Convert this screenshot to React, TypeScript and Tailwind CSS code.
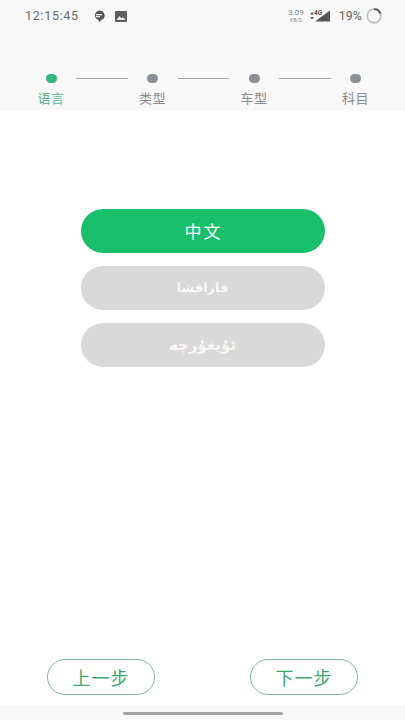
const font = { fontFamily: '"Roboto","Noto Sans CJK SC",sans-serif' };

function Step({ label, active }: { label: string; active?: boolean }) {
  return (
    <div className="flex w-[50px] shrink-0 flex-col items-center">
      <div className={`h-[9px] w-[11px] rounded-full ${active ? "bg-[#35b47f]" : "bg-[#8e8e96]"}`} />
      <div className={`mt-[7px] text-[13px] leading-[18px] tracking-[0.5px] whitespace-nowrap ${active ? "text-[#5cb68f]" : "text-[#8a8a8a]"}`}>{label}</div>
    </div>
  );
}

function Line() {
  return <div className="mt-[4px] h-px w-[51.5px] shrink-0 bg-[#a8a8a8]" />;
}

function LangButton({ label, active, size }: { label: string; active?: boolean; size?: string }) {
  return (
    <button
      className={`flex h-[44px] w-[244px] items-center justify-center rounded-full ${active ? "bg-[#1abf6b] pt-[3px] pl-[2px] text-[17px] tracking-[2px] text-white" : `bg-[#d9d9d9] font-bold text-[#f7f7f7] ${size}`}`}
      style={active ? undefined : { fontFamily: '"DejaVu Sans",sans-serif' }}
    >
      {label}
    </button>
  );
}

function NavButton({ label }: { label: string }) {
  return (
    <button className="flex h-[36px] w-[108px] items-center justify-center rounded-full border border-[#7dba9b] pt-[2px] text-[18px] tracking-[1px] text-[#3fa56d]">
      {label}
    </button>
  );
}

export default function App() {
  return (
    <div className="flex h-[720px] w-[405px] flex-col overflow-hidden bg-white" style={font}>
      <header className="h-[110px] shrink-0 bg-[#f8f8f8]">
        <div className="flex h-[32px] items-center pr-[23px] pl-[25px] text-[#6b6b6b]">
          <span className="text-[12.5px] tracking-[0.7px]">12:15:45</span>
          <svg className="ml-[14px]" width="12" height="13" viewBox="0 0 12 13">
            <path d="M6 0.5a5.5 5 0 0 1 2 9.7L6.2 12.4 5.6 10A5.5 5 0 0 1 6 .5z" fill="#555" />
            <rect x="3" y="4" width="6" height="1.3" fill="#eee" />
            <rect x="3" y="6" width="4" height="1.3" fill="#eee" />
          </svg>
          <svg className="ml-[10px]" width="12" height="11" viewBox="0 0 12 11">
            <rect width="12" height="11" rx="1" fill="#5c5c5c" />
            <path d="M1.5 9l3-4 2 2.5 1.5-1.5 2.5 3z" fill="#eee" />
          </svg>
          <div className="ml-auto flex flex-col items-center leading-none text-[#8a8a8a]">
            <span className="text-[8px] leading-[8px]">3.09</span>
            <span className="text-[5px] leading-[6px]">KB/S</span>
          </div>
          <svg className="ml-[5px]" width="22" height="14" viewBox="0 0 22 14">
            <path d="M1 5.5l2-2.5 2 2.5zM1 8l2 2.5 2-2.5z" fill="#555" />
            <path d="M21 1.5V12.5H6z" fill="#555" />
            <text x="5" y="5.5" fontSize="6.5" fontWeight="700" fill="#555">4G</text>
          </svg>
          <span className="ml-[8px] text-[12.5px] text-[#666]">19%</span>
          <svg className="ml-[4px]" width="16" height="16" viewBox="0 0 16 16">
            <circle cx="8" cy="8" r="6.8" fill="none" stroke="#c4c4c4" strokeWidth="1.8" />
            <path d="M8 1.2A6.8 6.8 0 0 1 14.5 6" fill="none" stroke="#555" strokeWidth="1.8" />
          </svg>
        </div>
        <div className="mt-[42px] flex items-start pl-[26px]">
          <Step label="语言" active />
          <Line />
          <Step label="类型" />
          <Line />
          <Step label="车型" />
          <Line />
          <Step label="科目" />
        </div>
      </header>
      <main className="flex flex-1 flex-col items-center pt-[99px]">
        <div className="flex flex-col gap-[13px]">
          <LangButton label="中文" active />
          <LangButton label="قازاقشا" size="text-[13px]" />
          <LangButton label="ئۇيغۇرچە" size="text-[15px]" />
        </div>
        <div className="mt-auto mb-[11px] flex w-full justify-between px-[47px]">
          <NavButton label="上一步" />
          <NavButton label="下一步" />
        </div>
      </main>
      <footer className="flex h-[14px] shrink-0 items-end justify-center bg-[#f8f8f8] pb-[5px]">
        <div className="h-[3px] w-[160px] rounded-full bg-[#a5a5a5]" />
      </footer>
    </div>
  );
}
